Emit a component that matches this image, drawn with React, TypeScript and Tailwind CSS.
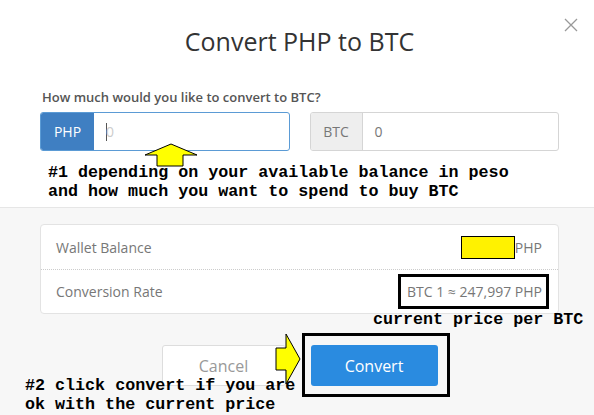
import React from 'react';

function UpArrow() {
  return (
    <svg width="56" height="24" viewBox="0 0 56 24" className="absolute left-[142px] top-[143px]">
      <polygon points="29,1 55,12 41,12 41,23 15,23 15,12 3,12" fill="#ffff00" stroke="#000" strokeWidth="1" />
    </svg>
  );
}

function RightArrow() {
  return (
    <svg width="28" height="54" viewBox="0 0 28 54" className="absolute left-[274px] top-[332px]">
      <polygon points="26,27 12,2 12,16 2,16 2,38 12,38 12,52" fill="#ffff00" stroke="#000" strokeWidth="1" />
    </svg>
  );
}

export default function App() {
  return (
    <div className="w-[594px] h-[415px] relative overflow-hidden bg-white font-['Open_Sans',sans-serif]">
      {/* header */}
      <div className="h-[76px] flex items-center justify-center pl-[5px] pt-[6px]">
        <h1 className="text-[25px] text-[#333] leading-none">Convert PHP to BTC</h1>
      </div>
      <button className="absolute top-[18px] right-[16px]">
        <svg width="14" height="14" viewBox="0 0 14 14">
          <path d="M1 1 L13 13 M13 1 L1 13" stroke="#999" strokeWidth="1.3" fill="none" />
        </svg>
      </button>

      {/* body */}
      <div className="h-[131px] pl-[40px] pr-[35px] pt-[15px]">
        <div className="text-[13px] font-semibold text-[#555] leading-none mb-[8px] pl-[2px]">
          How much would you like to convert to BTC?
        </div>
        <div className="grid grid-cols-2 gap-[20px]">
          <div className="flex h-[39px] rounded-[3px] border border-[#5b9bd5] overflow-hidden">
            <div className="w-[53px] bg-[#3f7fc2] text-white text-[14px] flex items-center justify-center">PHP</div>
            <div className="flex-1 flex items-center pl-[12px] text-[14px] text-[#ccc]">
              <span className="w-px h-[18px] bg-[#555] mr-[-1px]" />0
            </div>
          </div>
          <div className="flex h-[39px] rounded-[3px] border border-[#d5d5d5] overflow-hidden">
            <div className="w-[52px] bg-[#eee] border-r border-[#d5d5d5] text-[#777] text-[14px] flex items-center justify-center">BTC</div>
            <div className="flex-1 flex items-center pl-[12px] text-[14px] text-[#777]">0</div>
          </div>
        </div>
      </div>

      {/* footer */}
      <div className="h-[208px] bg-[#f7f7f7] border-t border-[#e6e6e6] pl-[40px] pr-[35px] pt-[16px]">
        <div className="bg-white border border-[#e3e3e3] rounded-[4px] text-[14px] text-[#777]">
          <div className="h-[45px] flex items-center justify-between pl-[15px] pr-[16px] border-b border-dotted border-[#ccc]">
            <span>Wallet Balance</span>
            <span className="flex items-center">
              <span className="w-[54px] h-[23px] bg-[#fff200] border border-black" />
              PHP
            </span>
          </div>
          <div className="h-[43px] flex items-center justify-between pl-[15px] pr-[16px]">
            <span>Conversion Rate</span>
            <span>BTC 1 ≈ 247,997 PHP</span>
          </div>
        </div>
        <div className="flex justify-center gap-[25px] mt-[31px]">
          <button className="w-[124px] h-[41px] bg-white border border-[#ddd] rounded-[3px] text-[16px] text-[#999]">Cancel</button>
          <button className="w-[127px] h-[41px] bg-[#2a8be0] rounded-[3px] text-[16px] text-white">Convert</button>
        </div>
      </div>

      {/* annotations */}
      <UpArrow />
      <div className="absolute left-[48px] top-[163px] font-['Liberation_Mono',monospace] font-bold text-[16.7px] leading-[19px] text-black whitespace-pre">
        {'#1 depending on your available balance in peso\nand how much you want to spend to buy BTC'}
      </div>
      <div className="absolute left-[398px] top-[274px] w-[151px] h-[35px] border-[3px] border-black" />
      <div className="absolute left-[373px] top-[310px] font-['Liberation_Mono',monospace] font-bold text-[16.7px] leading-[19px] text-black whitespace-pre">
        current price per BTC
      </div>
      <div className="absolute left-[302px] top-[333px] w-[148px] h-[64px] border-[3px] border-black" />
      <RightArrow />
      <div className="absolute left-[25px] top-[376px] font-['Liberation_Mono',monospace] font-bold text-[16.7px] leading-[19px] text-black whitespace-pre">
        {'#2 click convert if you are\nok with the current price'}
      </div>
    </div>
  );
}
